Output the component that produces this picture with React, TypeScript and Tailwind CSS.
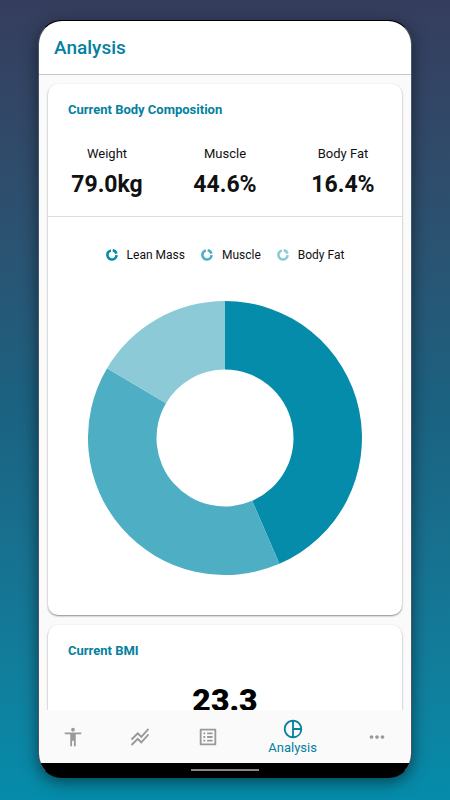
import React from 'react';
import {
  MdAccessibility,
  MdMoreHoriz,
  MdOutlineListAlt,
  MdPieChartOutline,
  MdStackedLineChart,
} from 'react-icons/md';

const stats = [
  { label: 'Weight', value: '79.0kg' },
  { label: 'Muscle', value: '44.6%' },
  { label: 'Body Fat', value: '16.4%' },
];

const segments = [
  { label: 'Lean Mass', share: 43.5, color: '#048caa' },
  { label: 'Muscle', share: 40, color: '#4eaec3' },
  { label: 'Body Fat', share: 16.5, color: '#8dcad7' },
];

const tabs = [
  { label: 'Body', icon: MdAccessibility },
  { label: 'Trends', icon: MdStackedLineChart },
  { label: 'Log', icon: MdOutlineListAlt },
  { label: 'Analysis', icon: MdPieChartOutline, active: true },
  { label: 'More', icon: MdMoreHoriz },
];

const point = (radius: number, percent: number) => {
  const angle = (percent / 100) * 2 * Math.PI;
  return `${radius * Math.sin(angle)} ${-radius * Math.cos(angle)}`;
};

const slicePath = (start: number, end: number) => {
  const large = end - start > 50 ? 1 : 0;
  return `M${point(100, start)}A100 100 0 ${large} 1 ${point(100, end)}L${point(50, end)}A50 50 0 ${large} 0 ${point(50, start)}Z`;
};

const DonutChart = () => {
  let start = 0;

  return (
    <svg viewBox="-100 -100 200 200" className="w-full" role="img" aria-label="Body composition">
      {segments.map((segment) => {
        const from = start;
        start += segment.share;
        return <path key={segment.label} d={slicePath(from, start)} fill={segment.color} />;
      })}
    </svg>
  );
};

const LegendIcon = ({ color }: { color: string }) => (
  <svg viewBox="0 0 12 12" className="size-3" fill="none" stroke={color} strokeWidth="2.6" aria-hidden="true">
    <path d="M4.9 1.4A4.6 4.6 0 1 0 10.6 6.1" />
    <path d="M6.7 1.3A4.7 4.7 0 0 1 10.4 4.6" />
  </svg>
);

const Card = ({ title, children }: { title: string; children: React.ReactNode }) => (
  <section className="shrink-0 rounded-[10px] bg-white shadow-[0_1px_2px_rgba(0,0,0,0.45)]">
    <h2 className="px-5 pt-4 text-[13px] leading-5 font-bold text-[#0480a0]">{title}</h2>
    {children}
  </section>
);

const BottomNav = () => (
  <nav className="flex h-[53px] shrink-0 bg-[#fafafa]">
    {tabs.map((tab) => (
      <button
        key={tab.label}
        type="button"
        aria-label={tab.label}
        className={`flex flex-col items-center justify-center ${
          tab.active ? 'flex-[3] text-[#0480a0]' : 'flex-[2] text-[#999999]'
        }`}
      >
        <tab.icon className="size-[22px]" />
        {tab.active && <span className="text-[13px] leading-4">{tab.label}</span>}
      </button>
    ))}
  </nav>
);

export default function App() {
  return (
    <div className="flex h-screen flex-col bg-linear-to-b from-[#353d5d] via-[#1b6180] to-[#048caa] px-[38px] pt-5 pb-[22px] font-[Roboto,sans-serif] text-[#111111]">
      <div className="flex min-h-0 flex-1 flex-col overflow-hidden rounded-3xl border border-x-[#46566c] border-y-black bg-black shadow-[0_4px_16px_rgba(0,0,0,0.5)]">
        <header className="shrink-0 border-b border-[#c4c4c4] bg-white px-[15px] py-3">
          <h1 className="text-[19px] leading-[29px] font-medium text-[#0480a0]">Analysis</h1>
        </header>

        <main className="flex min-h-0 flex-1 flex-col gap-[10px] overflow-hidden bg-[#fafafa] px-[9px] pt-[9px]">
          <Card title="Current Body Composition">
            <dl className="grid grid-cols-3 border-b border-[#dddddd] pt-6 pb-[15px] text-center">
              {stats.map((stat) => (
                <div key={stat.label}>
                  <dt className="text-[13px] leading-5">{stat.label}</dt>
                  <dd className="pt-[5px] text-[23px] leading-8 font-bold">{stat.value}</dd>
                </div>
              ))}
            </dl>
            <ul className="flex justify-center gap-4 pt-7 text-xs leading-5">
              {segments.map((segment) => (
                <li key={segment.label} className="flex items-center gap-[9px]">
                  <LegendIcon color={segment.color} />
                  {segment.label}
                </li>
              ))}
            </ul>
            <div className="px-10 pt-9 pb-10">
              <DonutChart />
            </div>
          </Card>

          <Card title="Current BMI">
            <p className="pt-5 pb-5 text-center text-[32px] leading-[38px] font-black text-black">23.3</p>
          </Card>
        </main>

        <BottomNav />

        <div className="flex h-[14px] shrink-0 items-center justify-center bg-black">
          <div className="h-[2px] w-[68px] bg-[#8c8488]" />
        </div>
      </div>
    </div>
  );
}
